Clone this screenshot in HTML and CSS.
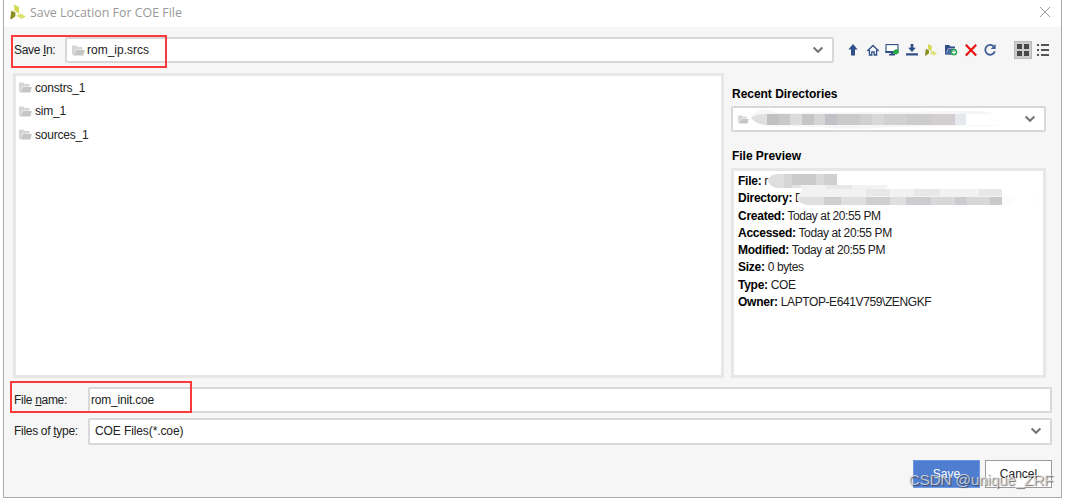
FILE: index.html
```
<!DOCTYPE html>
<html lang="en">
<head>
  <meta charset="UTF-8">
  <title>Save Location For COE File</title>
  <link rel="stylesheet" href="styles.css">
</head>
<body>
  <svg width="0" height="0" class="defs">
    <symbol id="folder" viewBox="0 0 13 11">
      <path d="M0 9.8V1.2Q0 .5 .9 .5H4.6L5.6 2H9.8Q10.5 2 10.5 2.7V4.4H3.4L1.2 9.8Z" fill="#d4d4d4"/>
      <path d="M3.8 5H12.8L11.4 10.5H1.2Z" fill="#c6c6c6"/>
    </symbol>
    <symbol id="chevron" viewBox="0 0 12 8">
      <path d="M1.6 1.6L6 5.8L10.4 1.6" fill="none" stroke="#757575" stroke-width="2.1"/>
    </symbol>
    <symbol id="logo" viewBox="0 0 16 16">
      <path d="M4 .4L9 3V9.8L4.4 6.6Z" fill="#d3da50"/>
      <path d="M1.4 6.4L5.4 8.4V12.2L1.2 15.4L.2 14.6Z" fill="#8a9020"/>
      <path d="M6.2 11.8L10.6 9.4L16 12.4L11.6 15Z" fill="#dde26c"/>
    </symbol>
  </svg>

  <div class="window">
    <header class="titlebar">
      <svg class="app-logo" width="16" height="16"><use href="#logo"/></svg>
      <span class="title">Save Location For COE File</span>
      <svg class="close" width="12" height="12" viewBox="0 0 12 12"><path d="M1 1L11 11M11 1L1 11" stroke="#999" fill="none"/></svg>
    </header>

    <div class="save-in">
      <label class="label">Save <u>I</u>n:</label>
      <div class="combo">
        <svg width="13" height="11"><use href="#folder"/></svg>
        <span class="value">rom_ip.srcs</span>
        <svg class="arrow" width="12" height="8"><use href="#chevron"/></svg>
      </div>
      <div class="toolbar">
        <svg width="14" height="14" viewBox="0 0 14 14"><path d="M7 1L11.6 6.4H9V12.6H5V6.4H2.4Z" fill="#304e87"/></svg>
        <svg width="14" height="14" viewBox="0 0 14 14"><path d="M1.3 8L7 2.5L12.7 8M3.4 7V12H5.8V8.8H8.2V12H10.6V7" fill="none" stroke="#304e87" stroke-width="1.3"/></svg>
        <svg width="14" height="14" viewBox="0 0 14 14"><rect x="1" y="1.6" width="12" height="7.8" fill="#fff" stroke="#304e87" stroke-width="1.1"/><path d="M.5 8H9V10H.5ZM5.8 10H8V11H10V12.5H4V11H5.8Z" fill="#304e87"/><path d="M9.5 6.8L13.5 6V10L11.5 11.4L8 10.7V8.4Z" fill="#28a745"/></svg>
        <svg width="14" height="14" viewBox="0 0 14 14"><path d="M5.6 1H8.4V4.8H10.9L7 8.9L3.1 4.8H5.6ZM1 10.2H13V12.6H1Z" fill="#304e87"/></svg>
        <svg width="14" height="14" viewBox="-1 -1 18 18"><use href="#logo" width="16" height="16"/></svg>
        <svg width="14" height="14" viewBox="0 0 14 14"><path d="M1 11.5V2H5.2L6.5 3.5H11V5.5H4L2.5 9L3.2 11.5Z" fill="#304e87"/><path d="M4 6H12V11.8H2.5Z" fill="#4668a0"/><circle cx="10" cy="9.3" r="3.2" fill="#2cab50"/><path d="M8 9.3H12M10 7.3V11.3" stroke="#fff" stroke-width="1.2"/></svg>
        <svg width="14" height="14" viewBox="0 0 14 14"><path d="M1.8 1.8L12.2 12.4M12.2 1.8L1.8 12.4" stroke="#ec1010" stroke-width="2.2"/></svg>
        <svg width="14" height="14" viewBox="0 0 14 14"><path d="M11 3.8A4.9 4.9 0 1 0 11.8 8.4" fill="none" stroke="#3f5f96" stroke-width="1.8"/><path d="M12.6 1V6H7.7Z" fill="#3f5f96"/></svg>
      </div>
      <div class="views">
        <div class="view-on"><svg width="12" height="12" viewBox="0 0 12 12"><path d="M0 0H5V5H0ZM7 0H12V5H7ZM0 7H5V12H0ZM7 7H12V12H7Z" fill="#484848"/></svg></div>
        <svg width="12" height="12" viewBox="0 0 12 12"><path d="M0 0H2V2H0ZM4 0H12V2H4ZM0 5H2V7H0ZM4 5H12V7H4ZM0 10H2V12H0ZM4 10H12V12H4Z" fill="#555"/></svg>
      </div>
      <div class="mark mark-dir"></div>
    </div>

    <div class="main">
      <div class="files">
        <div class="file"><svg width="13" height="11"><use href="#folder"/></svg>constrs_1</div>
        <div class="file"><svg width="13" height="11"><use href="#folder"/></svg>sim_1</div>
        <div class="file"><svg width="13" height="11"><use href="#folder"/></svg>sources_1</div>
      </div>

      <aside class="side">
        <h2 class="heading">Recent Directories</h2>
        <div class="combo recent">
          <svg width="11" height="9"><use href="#folder"/></svg>
          <svg class="mosaic" width="246" height="20" viewBox="0 0 246 20">
            <path d="M0 8Q5 0 14 1L28 4L220 2Q242 2 245 7V17H200L140 18Q90 21 70 18L14 17Q2 14 0 8Z" fill="#f6f6f6"/>
            <path d="M0 9Q5 5 16 5V16Q4 15 0 9Z" fill="#dedfdf"/>
            <path d="M16 5H28V16H16Z" fill="#c3c1c0"/><path d="M28 5H39V16H28Z" fill="#c9c8cb"/>
            <path d="M39 5H51V16H39Z" fill="#dddcdd"/><path d="M51 5H63V16H51Z" fill="#c5c7c6"/>
            <path d="M63 5H74V16H63Z" fill="#d7d5d4"/><path d="M74 5H86V16H74Z" fill="#c0c0c6"/>
            <path d="M86 5H109V16H86Z" fill="#cbc9c9"/><path d="M109 5H121V16H109Z" fill="#d0d0d2"/>
            <path d="M121 5H133V16H121Z" fill="#d8d8d8"/><path d="M133 5H156V16H133Z" fill="#d2d1d1"/>
            <path d="M156 5H180V16H156Z" fill="#cdcbcc"/><path d="M180 5H204V16H180Z" fill="#d2ced1"/>
            <path d="M204 5H215V16H204Z" fill="#e5e9ee"/><path d="M215 5H246V16H215Z" fill="#fff"/>
          </svg>
          <svg class="arrow" width="12" height="8"><use href="#chevron"/></svg>
        </div>

        <h2 class="heading preview-heading">File Preview</h2>
        <div class="preview">
          <p><b>File:</b> r</p>
          <p><b>Directory:</b> D</p>
          <p><b>Created:</b> Today at 20:55 PM</p>
          <p><b>Accessed:</b> Today at 20:55 PM</p>
          <p><b>Modified:</b> Today at 20:55 PM</p>
          <p><b>Size:</b> 0 bytes</p>
          <p><b>Type:</b> COE</p>
          <p><b>Owner:</b> LAPTOP-E641V759\ZENGKF</p>
          <svg class="smudge" width="272" height="34" viewBox="0 0 272 34">
            <path d="M0 7Q2 1 10 1H16V15H8Q1 13 0 7Z" fill="#dedede"/>
            <path d="M16 1H24V15H16Z" fill="#d5d5d5"/><path d="M24 1H48V12H24Z" fill="#cbcbcb"/>
            <path d="M48 1H56V12H48Z" fill="#d8d8d8"/><path d="M56 1H69V12H56Z" fill="#d0d0d0"/>
            <path d="M24 12H69V15H24Z" fill="#e2e2e2"/>
            <path d="M32 12H117Q121 12 121 13L116 16H234V31H36Q29 31 29 24L34 17Z" fill="#f2f2f2"/>
            <path d="M58 12H84V16H58ZM98 16H122V23H98ZM146 16H172V23H146ZM211 16H234V23H211Z" fill="#e8e8e8"/>
            <path d="M30 24H56V32H40Q31 31 30 24Z" fill="#e0e0e0"/>
            <path d="M56 24H73V32H56ZM98 24H122V32H98Z" fill="#cfcfd0"/>
            <path d="M73 24H98V32H73ZM122 24H138V32H122Z" fill="#dfdfdf"/>
            <path d="M138 24H163V32H138ZM187 24H199V32H187Z" fill="#cdccd0"/>
            <path d="M163 24H187V32H163ZM199 24H222V32H199Z" fill="#d8d7da"/>
            <path d="M222 24H234V32H222Z" fill="#c9c9cb"/>
            <path d="M234 24H246V32H234ZM269 24H271V30H269Z" fill="#fcfcfc"/>
          </svg>
        </div>
      </aside>
    </div>

    <div class="field-row name-row">
      <label class="label">File <u>n</u>ame:</label>
      <div class="input">rom_init.coe</div>
      <div class="mark mark-name"></div>
    </div>
    <div class="field-row type-row">
      <label class="label">Files of <u>t</u>ype:</label>
      <div class="combo">
        <span>COE Files(*.coe)</span>
        <svg class="arrow" width="12" height="8"><use href="#chevron"/></svg>
      </div>
    </div>

    <footer class="actions">
      <div class="btn btn-save">Save</div>
      <div class="btn">Cancel</div>
      <div class="watermark">CSDN @unique_ZRF</div>
    </footer>
  </div>
</body>
</html>
```
FILE: styles.css
```
* {
  box-sizing: border-box;
}

body {
  margin: 0;
  height: 498px;
  overflow: hidden;
  background: #fff;
  font-family: "Liberation Sans", Arial, sans-serif;
  font-size: 12px;
  letter-spacing: -0.2px;
  color: #222;
}

svg {
  display: block;
  flex: none;
}

.defs {
  position: absolute;
}

.window {
  display: flex;
  flex-direction: column;
  width: 1059px;
  height: 498px;
  margin-left: 3px;
  background: #f6f6f6;
  border: 1px solid #aaa;
  border-top: none;
}

.titlebar {
  display: flex;
  align-items: center;
  height: 27px;
  padding: 0 10px 3px 6px;
  background: #fff;
}

.title {
  margin-left: 4px;
  font-family: "Open Sans", "Noto Sans", sans-serif;
  font-size: 12.4px;
  letter-spacing: 0;
  color: #999;
}

.close {
  margin-left: auto;
}

.save-in {
  position: relative;
  display: flex;
  align-items: center;
  height: 26px;
  margin-top: 10px;
  padding-left: 10px;
}

.save-in .label {
  width: 51px;
  letter-spacing: -0.35px;
}

.save-in .combo {
  width: 769px;
  padding-left: 5px;
}

.label {
  flex: none;
  white-space: nowrap;
}

.combo,
.input {
  display: flex;
  align-items: center;
  height: 26px;
  background: #fff;
  border: 2px solid #d8d8d8;
  border-radius: 2px;
}

.value {
  margin-left: 2px;
  letter-spacing: 0;
}

.arrow {
  margin-left: auto;
  margin-right: 8px;
}

.toolbar {
  display: flex;
  gap: 5.6px;
  margin-left: 12px;
}

.views {
  display: flex;
  align-items: center;
  gap: 5px;
  margin-left: 17px;
}

.view-on {
  display: grid;
  place-items: center;
  width: 18px;
  height: 18px;
  background: #ccc;
  border: 1px solid #b8b8b8;
}

.mark {
  position: absolute;
  border: 2px solid #fb3b3b;
}

.mark-dir {
  left: 7px;
  top: -2px;
  width: 156px;
  height: 33px;
}

.mark-name {
  left: 6px;
  top: -6px;
  width: 182px;
  height: 32px;
}

.main {
  display: flex;
  gap: 7px;
  height: 305px;
  margin-top: 10px;
  padding-left: 9px;
}

.files {
  width: 711px;
  padding: 0 3px;
  background: #fff;
  border: 3px solid #e7e7e7;
}

.file {
  display: flex;
  align-items: center;
  gap: 3px;
  height: 23.5px;
}

.side {
  display: flex;
  flex-direction: column;
  width: 315px;
}

.heading {
  margin: 14px 0 0 1px;
  font-size: 12px;
  line-height: 14px;
  letter-spacing: -0.03px;
  color: #000;
}

.recent {
  margin-top: 5px;
  padding-left: 5px;
}

.mosaic {
  margin-left: 2px;
}

.preview-heading {
  margin-top: 17px;
}

.preview {
  position: relative;
  flex: 1;
  margin-top: 5px;
  padding: 2px 4px;
  background: #fff;
  border: 3px solid #e7e7e7;
}

.preview p {
  margin: 0;
  line-height: 17.25px;
  letter-spacing: -0.4px;
}

.preview b {
  letter-spacing: -0.25px;
  color: #000;
}

.smudge {
  position: absolute;
  left: 34px;
  top: 2px;
}

.field-row {
  position: relative;
  display: flex;
  align-items: center;
  padding-left: 10px;
}

.field-row .label {
  width: 74px;
  padding-bottom: 1px;
  letter-spacing: -0.3px;
}

.field-row .combo,
.field-row .input {
  width: 964px;
  padding-bottom: 1px;
}

.name-row {
  margin-top: 9px;
}

.name-row .input {
  padding-left: 1px;
}

.type-row {
  margin-top: 5px;
}

.type-row .combo {
  height: 27px;
  padding-left: 5px;
  letter-spacing: -0.1px;
}

.actions {
  position: relative;
  display: flex;
  justify-content: flex-end;
  gap: 5px;
  margin-top: 15px;
  padding-right: 9px;
}

.btn {
  display: grid;
  place-items: center;
  width: 67px;
  height: 28px;
  background: #fff;
  border: 1px solid #999;
  letter-spacing: 0;
}

.btn-save {
  background: #4f7dd0;
  border-color: #6f98e0;
  color: #fff;
}

.watermark {
  position: absolute;
  right: 8px;
  top: 10px;
  font-size: 15.5px;
  line-height: 19px;
  letter-spacing: -0.3px;
  white-space: nowrap;
  color: rgba(225, 225, 225, 0.8);
  text-shadow: 1px 1px 1px rgba(50, 50, 50, 0.7);
}
```
